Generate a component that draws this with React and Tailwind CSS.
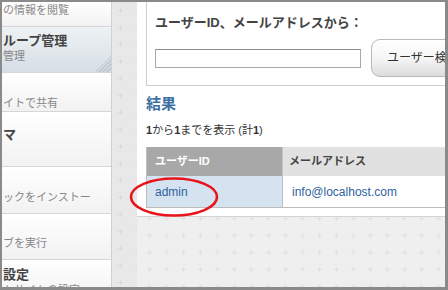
import React from "react";

const plus =
  "bg-[radial-gradient(ellipse_3px_1px_at_center,#e0e0e0_80%,transparent),radial-gradient(ellipse_1px_3px_at_center,#e0e0e0_80%,transparent)] bg-[length:17px_17px]";
const plusDark =
  "bg-[radial-gradient(ellipse_3px_1px_at_center,#dadada_80%,transparent),radial-gradient(ellipse_1px_3px_at_center,#dadada_80%,transparent)] bg-[length:17px_17px]";

const SideItem = ({ title, desc, h, pt, active }) => (
  <div
    className={`relative shrink-0 flex flex-col border-b border-[#d6d6d6] pl-[1px] ${h} ${pt} ${
      active
        ? "bg-linear-to-b from-[#eef2f4] to-[#d6dfe5]"
        : "bg-linear-to-b from-white to-[#f2f2f2]"
    }`}
  >
    {title !== undefined && (
      <div className="h-4 text-[13px] leading-4 font-bold text-[#444] whitespace-nowrap">{title}</div>
    )}
    {desc !== undefined && (
      <div className="h-[15px] text-[11px] leading-[15px] text-[#888] whitespace-nowrap">{desc}</div>
    )}
    {active && (
      <svg className="absolute right-0 bottom-0" width="16" height="16" viewBox="0 0 16 16">
        <defs>
          <clipPath id="tri">
            <polygon points="16,0 16,16 0,16" />
          </clipPath>
        </defs>
        <g clipPath="url(#tri)" stroke="#b9c3c9" strokeWidth="1.4">
          <line x1="0" y1="20" x2="20" y2="0" />
          <line x1="4" y1="20" x2="24" y2="0" />
          <line x1="8" y1="20" x2="28" y2="0" />
          <line x1="-4" y1="20" x2="16" y2="0" />
        </g>
      </svg>
    )}
  </div>
);

const App = () => {
  return (
    <div className="relative w-[448px] h-[290px] overflow-hidden border-t-2 border-l-2 border-r-[3px] border-b-[3px] border-[#8a8a8a] flex font-['Liberation_Sans','Noto_Sans_CJK_JP',sans-serif]">
      {/* sidebar */}
      <div className="w-[110px] shrink-0 flex flex-col overflow-hidden bg-white border-r border-[#d0d0d0]">
        <SideItem desc="の情報を閲覧" h="h-[25px]" pt="pt-[1px]" />
        <SideItem title="ループ管理" desc="管理" h="h-[46px]" pt="pt-[6px]" active />
        <SideItem title="" desc="イトで共有" h="h-[39px]" pt="pt-[8px]" />
        <SideItem title="マ" h="h-[55px]" pt="pt-[15px]" />
        <SideItem title="" desc="ックをインストー" h="h-[47px]" pt="pt-[7px]" />
        <SideItem title="" desc="ブを実行" h="h-[46px]" pt="pt-[6px]" />
        <SideItem title="設定" desc="トサイトの設定" h="h-[40px]" pt="pt-[7px]" />
      </div>

      {/* gap column */}
      <div className={`w-[25px] shrink-0 bg-[#e8e8e8] ${plusDark}`} />

      {/* main */}
      <div className={`flex-1 flex flex-col min-w-0 bg-[#efefef] ${plus} bg-[position:4px_4px]`}>
        <div className="bg-white pl-[9px] pb-[8px] border-b border-[#d4d4d4] overflow-hidden">
          <div className="w-[360px] h-[84px] border-l border-b border-[#cfcfcf] pl-[8px] pt-[12px]">
            <div className="text-[13px] leading-[18px] font-bold text-[#444] whitespace-nowrap">
              ユーザーID、メールアドレスから：
            </div>
            <div className="mt-[7px] flex items-center">
              <div className="w-[206px] h-[19px] border border-[#a9a9a9] border-t-[#8a8a8a] bg-white" />
              <div className="ml-[10px] w-[110px] h-[38px] shrink-0 rounded-[9px] border border-[#b8b8b8] bg-linear-to-b from-white via-[#f6f6f6] to-[#dcdcdc] flex items-center pl-[15px] text-[12px] text-[#333] whitespace-nowrap">
                ユーザー検索
              </div>
            </div>
          </div>

          <div className="mt-[8px] text-[15px] leading-[20px] font-bold text-[#3b6fa3]">結果</div>
          <div className="mt-[7px] text-[11px] leading-[18px] text-[#333] whitespace-nowrap">
            <b>1</b>から<b>1</b>までを表示 (計<b>1</b>)
          </div>

          <div className="mt-[8px] w-[320px] border-l border-b border-[#bdbdbd]">
            <div className="flex h-[29px] text-[11px] font-bold">
              <div className="w-[135px] bg-[#a8a8a8] text-white flex items-center pl-[8px]">ユーザーID</div>
              <div className="flex-1 bg-[#e1e1e1] text-[#444] flex items-center pl-[6px] border-l border-[#c4c4c4]">
                メールアドレス
              </div>
            </div>
            <div className="flex h-[31px] text-[12px] text-[#2f5f9e]">
              <div className="w-[135px] bg-[#d4e3ef] flex items-center pl-[8px]">admin</div>
              <div className="flex-1 bg-white flex items-center pl-[9px] border-l border-[#bdbdbd]">
                info@localhost.com
              </div>
            </div>
          </div>
        </div>
      </div>

      {/* red circle annotation */}
      <svg className="absolute left-[126px] top-[173px] pointer-events-none" width="94" height="44" viewBox="0 0 94 44">
        <ellipse cx="46" cy="22" rx="43" ry="18.5" fill="none" stroke="#e8141b" strokeWidth="2.6" />
      </svg>
    </div>
  );
};

export default App;
